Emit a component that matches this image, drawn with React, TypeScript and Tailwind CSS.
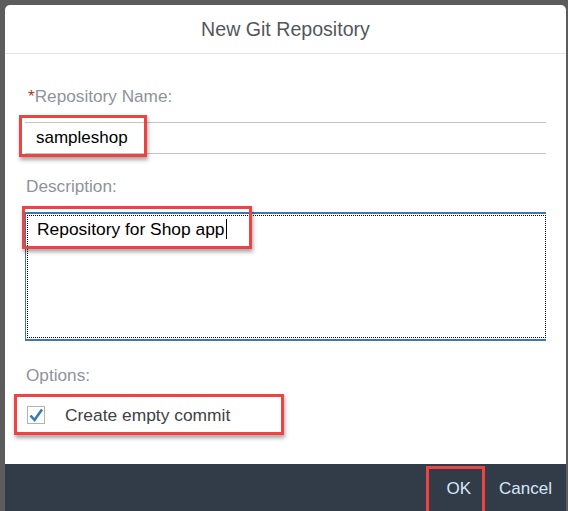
import React from "react";

const redBox = "absolute border-[3px] border-[#ec4343] shadow-[1px_3px_4px_rgba(0,0,0,0.35)] pointer-events-none";

export default function App() {
  return (
    <div
      className="w-[568px] h-[511px] bg-[#5c5c5c] pt-[5px] pl-[5px] pr-[2px] overflow-hidden"
      style={{ fontFamily: '"Liberation Sans", Arial, sans-serif' }}
    >
      <div className="w-full h-full bg-white rounded-t-[5px] flex flex-col overflow-hidden">
        <div className="h-[49px] shrink-0 flex items-center justify-center pt-[2px] border-b border-[#e4e4e4] text-[19.6px] text-[#52575d]">
          New Git Repository
        </div>
        <div className="flex-1 flex flex-col px-[20px]">
          <div className="mt-[32px] h-[20px] leading-[20px] text-[17.2px] text-[#8e9399] pl-[3px]">
            <span className="text-[#b5302c]">*</span>Repository Name:
          </div>
          <div className="relative mt-[16px] h-[32px] border-t border-b border-[#c4c4c4] flex items-center pl-[11px] text-[17px] text-black">
            sampleshop
            <div className={redBox + " left-[-6px] top-[-8px] w-[128px] h-[42px]"} />
          </div>
          <div className="mt-[22px] h-[20px] leading-[20px] text-[17.2px] text-[#8e9399] pl-[1px]">
            Description:
          </div>
          <div className="relative mt-[16px] h-[129px] border-t-2 border-b-2 border-l border-[#3d79b0] p-[1px] pr-0">
            <div className="w-[519px] h-full border border-dotted border-black flex items-start">
              <div className="mt-[1px] pl-[9px] text-[17.4px] text-black leading-[24px] flex items-center">
                Repository for Shop app
                <span className="inline-block w-[1px] h-[20px] bg-black ml-[1px]" />
              </div>
            </div>
            <div className={redBox + " left-[-4px] top-[-8px] w-[230px] h-[43px]"} />
          </div>
          <div className="mt-[24px] h-[20px] leading-[20px] text-[17.2px] text-[#8e9399] pl-[1px]">
            Options:
          </div>
          <div className="relative mt-[20px] h-[20px] flex items-center">
            <div className="ml-[2px] w-[18px] h-[18px] border border-[#b3b3b3] bg-white flex items-center justify-center">
              <svg width="16" height="16" viewBox="0 0 16 16">
                <path d="M2.5 8.5 L6.5 13 L14 2.5" fill="none" stroke="#3b78b6" strokeWidth="2.6" strokeLinejoin="miter" />
              </svg>
            </div>
            <span className="ml-[20px] text-[17.4px] text-[#3e4247]">Create empty commit</span>
            <div className={redBox + " left-[-11px] top-[-11px] w-[270px] h-[41px]"} />
          </div>
        </div>
        <div className="h-[47px] shrink-0 bg-[#323c48] flex items-center justify-end pr-[14px] pt-[3px] text-[17px] text-[#d6e6f7]">
          <div className="relative mr-[28px] leading-[20px]">
            OK
            <div className="absolute border-[3px] border-[#ec4343] left-[-21px] top-[-13px] w-[59px] h-[50px]" />
          </div>
          <div className="leading-[20px]">Cancel</div>
        </div>
      </div>
    </div>
  );
}
